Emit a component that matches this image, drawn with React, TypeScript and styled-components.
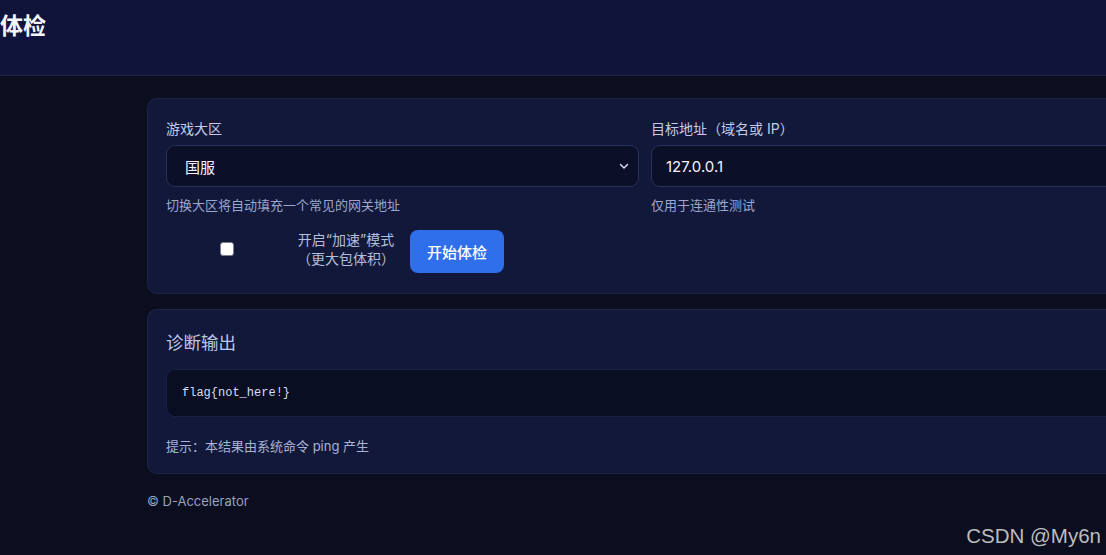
import React from "react";
import styled, { createGlobalStyle } from "styled-components";

const GlobalStyle = createGlobalStyle`
  html, body {
    margin: 0;
    padding: 0;
    background: #0a0e1e;
    overflow: hidden;
  }
  body {
    font-family: Inter, "Noto Sans CJK SC", "Noto Sans", sans-serif;
    color: #e6ebff;
  }
`;

const Page = styled.div`
  width: 1106px;
  height: 555px;
  overflow: hidden;
  position: relative;
  background: #0a0e1e;
`;

const Header = styled.header`
  height: 76px;
  background: #11143a;
  border-bottom: 1px solid #1d2144;
  box-sizing: border-box;
  padding-top: 10px;
`;

const Title = styled.h1`
  margin: 0;
  font-size: 23px;
  font-weight: 700;
  line-height: 32px;
  color: #f4f6ff;
`;

const Main = styled.main`
  padding: 22px 0 0 147px;
  width: 1000px;
`;

const Card = styled.section<{ $tall?: boolean }>`
  background: #12183a;
  border: 1px solid #1e2447;
  border-radius: 10px;
  padding: 19px 18px ${(p) => (p.$tall ? "20px" : "18px")} 18px;
  margin-bottom: 15px;
  box-sizing: border-box;
`;

const Grid = styled.div`
  display: grid;
  grid-template-columns: 473px 473px;
  column-gap: 12px;
`;

const Field = styled.div`
  display: flex;
  flex-direction: column;
`;

const Label = styled.label`
  font-size: 14px;
  line-height: 20px;
  color: #c3cbe6;
  margin: 1px 0 6px;
`;

const SelectBox = styled.div`
  height: 42px;
  box-sizing: border-box;
  border: 1px solid #283158;
  border-radius: 9px;
  background: #0b0f28;
  display: flex;
  align-items: center;
  justify-content: space-between;
  padding: 0 8px 0 18px;
  font-size: 15px;
  color: #f2f4ff;
`;

const InputBox = styled(SelectBox)`
  padding-left: 14px;
  border-radius: 9px 0 0 9px;
`;

const Help = styled.div`
  font-size: 13px;
  line-height: 18px;
  color: #9ca7cc;
  margin-top: 9px;
`;

const ActionRow = styled.div`
  display: flex;
  align-items: flex-start;
  margin-top: 16px;
`;

const CheckLabel = styled.label`
  display: flex;
  align-items: center;
  gap: 8px;
`;

const CheckWrap = styled.span`
  width: 122px;
  display: flex;
  justify-content: center;
`;

const Check = styled.span`
  width: 12px;
  height: 12px;
  background: #ffffff;
  border: 1px solid #7a7f8c;
  border-radius: 3px;
  display: inline-block;
`;

const CheckText = styled.span`
  width: 100px;
  text-align: center;
  font-size: 14px;
  line-height: 19px;
  color: #b4bedd;
`;

const Button = styled.button`
  margin-left: 14px;
  width: 94px;
  height: 43px;
  border: none;
  border-radius: 8px;
  background: #2f6fea;
  color: #ffffff;
  font-family: inherit;
  font-size: 15px;
  font-weight: 500;
`;

const CardTitle = styled.h2`
  margin: 2px 0 14px;
  font-size: 17.5px;
  font-weight: 400;
  line-height: 24px;
  color: #bcc7ec;
`;

const Output = styled.pre`
  margin: 0;
  height: 48px;
  box-sizing: border-box;
  background: #0a0e22;
  border: 1px solid #1b2142;
  border-right: none;
  border-radius: 9px 0 0 9px;
  padding: 0 15px;
  display: flex;
  align-items: center;
  font-family: "Liberation Mono", "DejaVu Sans Mono", monospace;
  font-size: 12px;
  color: #d7ddf3;
`;

const Hint = styled.div`
  margin-top: 20px;
  font-size: 13px;
  line-height: 18px;
  color: #a9b2d2;
`;

const Footer = styled.footer`
  padding: 4px 0 0 147px;
  font-size: 13px;
  color: #9aa2bf;
`;

const Watermark = styled.div`
  position: absolute;
  right: 5px;
  bottom: 7px;
  font-family: "Liberation Sans", Arial, sans-serif;
  font-size: 20.5px;
  color: #bdbdbd;
`;

const Chevron = () => (
  <svg width="12" height="12" viewBox="0 0 12 12" fill="none">
    <path d="M2.5 4.5 L6 8 L9.5 4.5" stroke="#e6e9f5" strokeWidth="1.4" strokeLinecap="round" strokeLinejoin="round" />
  </svg>
);

export default function App() {
  return (
    <Page>
      <GlobalStyle />
      <Header>
        <Title>体检</Title>
      </Header>
      <Main>
        <Card $tall>
          <Grid>
            <Field>
              <Label>游戏大区</Label>
              <SelectBox>
                <span>国服</span>
                <Chevron />
              </SelectBox>
              <Help>切换大区将自动填充一个常见的网关地址</Help>
            </Field>
            <Field>
              <Label>目标地址（域名或 IP）</Label>
              <InputBox>127.0.0.1</InputBox>
              <Help>仅用于连通性测试</Help>
            </Field>
          </Grid>
          <ActionRow>
            <CheckLabel>
              <CheckWrap>
                <Check />
              </CheckWrap>
              <CheckText>开启“加速”模式（更大包体积）</CheckText>
            </CheckLabel>
            <Button>开始体检</Button>
          </ActionRow>
        </Card>
        <Card>
          <CardTitle>诊断输出</CardTitle>
          <Output>flag{"{"}not_here!{"}"}</Output>
          <Hint>提示：本结果由系统命令 ping 产生</Hint>
        </Card>
      </Main>
      <Footer>© D-Accelerator</Footer>
      <Watermark>CSDN @My6n</Watermark>
    </Page>
  );
}
